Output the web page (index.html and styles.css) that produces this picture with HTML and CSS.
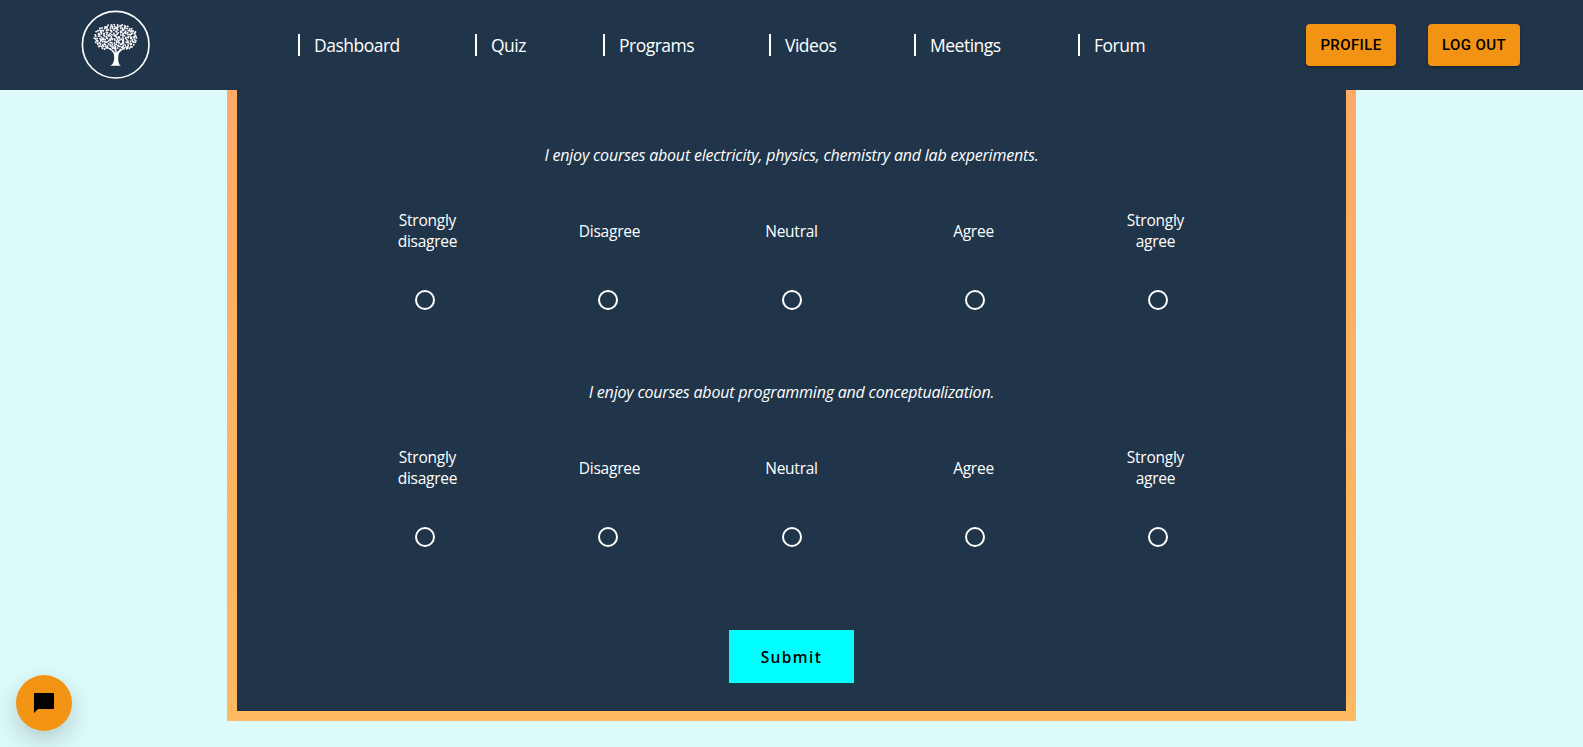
FILE: index.html
```html
<!DOCTYPE html>
<html lang="en">
<head>
<meta charset="utf-8">
<title>Quiz</title>
<link rel="stylesheet" href="styles.css">
</head>
<body>
<header class="topbar">
  <svg class="logo" viewBox="0 0 70 70">
    <circle cx="34.7" cy="34.7" r="33.3" fill="none" stroke="#fff" stroke-width="1.6"/>
    <g id="leaves" fill="#fff"></g>
    <path fill="#fff" d="M29 55.800c3-1 4-4 4.200-8 0-5-1-6-7.200-10l1-.6c4 2 6 3.600 7.500 5.600L33.500 36h1.200l1 6c2-2 5-3 8-5l.6.8c-3 2.200-6.600 4.200-7 8.200-.3 4 0 8.800 2.900 9.800z"/>
  </svg>
  <nav class="nav">
    <a class="nav-item">Dashboard</a>
    <a class="nav-item">Quiz</a>
    <a class="nav-item">Programs</a>
    <a class="nav-item">Videos</a>
    <a class="nav-item">Meetings</a>
    <a class="nav-item">Forum</a>
  </nav>
  <div class="actions">
    <button class="btn profile">PROFILE</button>
    <button class="btn logout">LOG OUT</button>
  </div>
</header>
<main class="card">
  <form class="panel">
    <section class="question">
      <p class="prompt">I enjoy courses about electricity, physics, chemistry and lab experiments.</p>
      <div class="labels"><span>Strongly<br>disagree</span><span>Disagree</span><span>Neutral</span><span>Agree</span><span>Strongly<br>agree</span></div>
      <div class="radios"><i class="radio"></i><i class="radio"></i><i class="radio"></i><i class="radio"></i><i class="radio"></i></div>
    </section>
    <section class="question">
      <p class="prompt">I enjoy courses about programming and conceptualization.</p>
      <div class="labels"><span>Strongly<br>disagree</span><span>Disagree</span><span>Neutral</span><span>Agree</span><span>Strongly<br>agree</span></div>
      <div class="radios"><i class="radio"></i><i class="radio"></i><i class="radio"></i><i class="radio"></i><i class="radio"></i></div>
    </section>
    <button class="submit" type="button">Submit</button>
  </form>
</main>
<button class="chat" aria-label="Chat">
  <svg viewBox="0 0 24 24" width="24" height="24"><path d="M21 2H3c-.6 0-1 .4-1 1v19l4-4h15c.6 0 1-.4 1-1V3c0-.6-.4-1-1-1z"/></svg>
</button>
<script src="leaves.js"></script>
</body>
</html>
```

FILE: leaves.js
```js
// Scatters the leaves of the logo's tree over an elliptical crown.
const crown = document.getElementById("leaves");
let seed = 11;
const rand = () => (seed = (seed * 16807) % 2147483647) / 2147483647;
for (let y = 14.5; y < 42; y += 2) {
  for (let x = 13; x < 57; x += 2) {
    const px = x + rand() * 1.8 - 0.9;
    const py = y + rand() * 1.8 - 0.9;
    const dx = (px - 34.8) / 21.5;
    const dy = (py - 28.5) / (py > 28.5 ? 12 : 14.2);
    if (Math.abs(dx) ** 2.3 + Math.abs(dy) ** 2.3 > 1) continue;
    const leaf = document.createElementNS("http://www.w3.org/2000/svg", "circle");
    leaf.setAttribute("cx", px);
    leaf.setAttribute("cy", py);
    leaf.setAttribute("r", 0.95);
    crown.appendChild(leaf);
  }
}
```

FILE: styles.css
```css
* { box-sizing: border-box; }
body {
  margin: 0;
  height: 747px;
  overflow: hidden;
  background: #dcfafa;
  color: #fff;
  font-family: "Noto Sans", "Open Sans", sans-serif;
}
button { border: 0; margin: 0; padding: 0; }
.topbar {
  display: flex;
  align-items: center;
  height: 90px;
  padding-left: 81px;
  background: #21354a;
}
.logo { width: 70px; height: 70px; flex: none; }
.nav {
  display: grid;
  grid-template-columns: 177px 128px 166px 145px 164px 100px;
  margin-left: 147px;
}
.nav-item {
  height: 22px;
  padding-left: 14px;
  border-left: 2px solid #fff;
  font-family: "Open Sans", sans-serif;
  font-size: 17.5px;
  line-height: 22px;
  letter-spacing: -0.5px;
}
.actions { display: flex; gap: 32px; margin-left: 128px; }
.btn {
  height: 42px;
  border-radius: 4px;
  background: #f39314;
  color: #000;
  font: 500 15px Roboto, sans-serif;
  letter-spacing: 0.4px;
  box-shadow: 0 3px 1px -2px rgba(0,0,0,.2), 0 2px 2px rgba(0,0,0,.14), 0 1px 5px rgba(0,0,0,.12);
}
.profile { width: 90px; }
.logout { width: 92px; }
.card {
  width: 1129px;
  height: 631px;
  margin: 0 auto;
  padding: 0 10px 10px;
  background: linear-gradient(#ffab66, #ffb960);
}
.panel {
  display: flex;
  flex-direction: column;
  align-items: center;
  height: 621px;
  padding-top: 54px;
  background: #21354a;
}
.question {
  display: flex;
  flex-direction: column;
  align-items: center;
  height: 237px;
}
.prompt {
  margin: 0;
  font-family: "Open Sans", sans-serif;
  font-size: 16px;
  font-style: italic;
  line-height: 22px;
  letter-spacing: -0.2px;
  white-space: nowrap;
}
.labels {
  display: grid;
  grid-template-columns: repeat(5, 182px);
  align-items: center;
  height: 42px;
  margin-top: 44px;
  text-align: center;
  font-family: "Open Sans", sans-serif;
  font-size: 15.5px;
  line-height: 21px;
  letter-spacing: -0.25px;
}
.radios {
  display: flex;
  justify-content: space-between;
  width: 753px;
  margin-top: 38px;
}
.radio {
  width: 20px;
  height: 20px;
  border: 2px solid #fff;
  border-radius: 50%;
}
.submit {
  width: 125px;
  height: 53px;
  margin-top: 12px;
  background: #0ff;
  color: #000;
  font: 600 15.5px "Open Sans", sans-serif;
  letter-spacing: 1.4px;
}
.chat {
  position: absolute;
  left: 16px;
  top: 675px;
  width: 56px;
  height: 56px;
  display: grid;
  place-items: center;
  border-radius: 50%;
  background: #f39314;
  box-shadow: 0 10px 25px rgba(0,0,0,.18);
}
```
